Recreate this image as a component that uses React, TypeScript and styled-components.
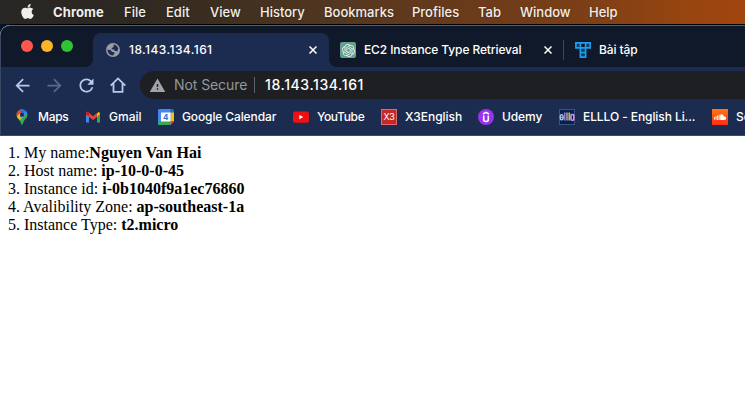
import React from 'react';
import styled, { createGlobalStyle } from 'styled-components';
import { FaApple } from 'react-icons/fa';
import { SiOpenai } from 'react-icons/si';
import { MdArrowBack, MdArrowForward, MdRefresh, MdWarning } from 'react-icons/md';

const GlobalStyle = createGlobalStyle`
  * { box-sizing: border-box; }
  html, body { margin: 0; padding: 0; overflow: hidden; background: #fff; }
  svg { display: block; flex: none; }
`;

const Desktop = styled.div`
  width: 745px;
  height: 411px;
  overflow: hidden;
  display: flex;
  flex-direction: column;
  background: linear-gradient(90deg, #04182c 0, #000 20px);
  font-family: Inter, 'Liberation Sans', sans-serif;
  white-space: nowrap;
`;

const MenuBar = styled.nav`
  height: 24px;
  flex: none;
  display: flex;
  align-items: center;
  padding-left: 19px;
  color: #f1eeeb;
  font-size: 13px;
  background: linear-gradient(90deg, #282725 0%, #2d2822 17%, #40301f 32%, #533720 45%, #693a1b 62%, #7d3f16 79%, #974510 92%, #a1440e 100%);
`;

const AppleSlot = styled.div`
  width: 34px;
  padding-bottom: 2px;
`;

const MenuItem = styled.span<{ $w: number; $bold?: boolean; $track?: number }>`
  width: ${p => p.$w}px;
  flex: none;
  line-height: 24px;
  font-weight: ${p => (p.$bold ? 700 : 500)};
  letter-spacing: ${p => p.$track ?? 0}px;
  text-shadow: 0 1px 2px rgba(0, 0, 0, 0.3);
`;

const Window = styled.div`
  flex: 1;
  margin-top: 1px;
  display: flex;
  flex-direction: column;
  border-radius: 10px 0 0 0;
  overflow: hidden;
  background: #fff;
`;

const Chrome = styled.div`
  height: 111px;
  flex: none;
  background: #1c2c50;
  border-top: 1px solid #535c69;
  border-left: 1px solid #3a4760;
  border-bottom: 1px solid #354b78;
  border-radius: 10px 0 0 0;
  overflow: hidden;
`;

const TabStrip = styled.div`
  height: 41px;
  display: flex;
  align-items: flex-end;
  background: #0f192a;
`;

const Controls = styled.div`
  width: 92px;
  height: 41px;
  flex: none;
  display: flex;
  gap: 8px;
  padding: 14px 0 0 20px;
  background: #0f192a;
  border-radius: 0 0 8px 0;
`;

const Light = styled.i<{ $c: string }>`
  width: 12px;
  height: 12px;
  border-radius: 50%;
  background: ${p => p.$c};
`;

const TabBacking = styled.div`
  display: flex;
  flex: 1;
  height: 41px;
  align-items: flex-end;
  background: linear-gradient(#0f192a 0 20px, #1c2c50 20px);
`;

const ActiveTab = styled.div`
  width: 236px;
  height: 34px;
  flex: none;
  display: flex;
  align-items: center;
  padding: 0 10px 0 13px;
  background: #1c2c50;
  border-radius: 8px 8px 0 0;
`;

const RestTabs = styled.div`
  flex: 1;
  height: 41px;
  display: flex;
  align-items: center;
  padding: 7px 0 0 11px;
  background: #0f192a;
  border-radius: 0 0 0 8px;
`;

const TabTitle = styled.span<{ $w: number; $track?: number }>`
  width: ${p => p.$w}px;
  flex: none;
  color: #fff;
  font-size: 12px;
  font-weight: 500;
  line-height: 16px;
  letter-spacing: ${p => p.$track ?? 0}px;
`;

const IconSlot = styled.span<{ $w: number }>`
  width: ${p => p.$w}px;
  flex: none;
`;

const OpenAiTile = styled.span`
  width: 16px;
  height: 16px;
  margin-right: 8px;
  flex: none;
  display: grid;
  place-items: center;
  color: #e6f2ee;
  background: #65a08e;
  border-radius: 2px;
`;

const Divider = styled.span<{ $h: number; $c: string }>`
  width: 1px;
  height: ${p => p.$h}px;
  flex: none;
  background: ${p => p.$c};
`;

const Toolbar = styled.div`
  height: 36px;
  display: flex;
  align-items: center;
  padding-left: 11px;
  color: #b7c9ec;
`;

const NavButton = styled.span<{ $dim?: boolean }>`
  width: 32px;
  flex: none;
  opacity: ${p => (p.$dim ? 0.38 : 1)};
`;

const HomeButton = styled(NavButton)`
  padding-left: 2px;
`;

const AddressBar = styled.div`
  flex: 1;
  height: 28px;
  display: flex;
  align-items: center;
  padding-left: 9px;
  background: #1e1f22;
  border-radius: 14px 0 0 14px;
  color: #a0a3a8;
`;

const AddressText = styled.span<{ $w: number; $bright?: boolean; $track?: number }>`
  width: ${p => p.$w}px;
  flex: none;
  font-size: 14px;
  line-height: 16px;
  padding-bottom: 1px;
  font-weight: ${p => (p.$bright ? 500 : 400)};
  color: ${p => (p.$bright ? '#fff' : '#94979c')};
  letter-spacing: ${p => p.$track ?? 0}px;
`;

const BookmarkBar = styled.div`
  height: 32px;
  display: flex;
  align-items: center;
  padding: 0 0 4px 13px;
`;

const Bookmark = styled.div<{ $w: number; $track?: number }>`
  width: ${p => p.$w}px;
  flex: none;
  display: flex;
  align-items: center;
  gap: 8px;
  color: #fff;
  font-size: 12px;
  font-weight: 500;
  line-height: 16px;
  letter-spacing: ${p => p.$track ?? 0}px;
`;

const Tile = styled.span<{ $bg: string; $round?: boolean }>`
  width: 16px;
  height: 16px;
  flex: none;
  display: grid;
  place-items: center;
  overflow: hidden;
  color: #fff;
  background: ${p => p.$bg};
  border-radius: ${p => (p.$round ? '50%' : '0')};
`;

const X3Tile = styled(Tile)`
  border: 1px solid #e06a6b;
  font: 400 9px/14px Inter, sans-serif;
  letter-spacing: -0.2px;
`;

const Page = styled.main`
  padding: 8px;
  color: #000;
  font: 16px/18px 'Liberation Serif', 'Times New Roman', serif;
`;

const Line = styled.div`
  height: 18px;
`;

const Globe = () => (
  <svg width="14" height="14" viewBox="0 0 14 14">
    <circle cx="7" cy="7" r="7" fill="#9a9da4" />
    <path d="M7.600 1.600C9.800 1.800 11.800 3.300 12.300 5.800L11.200 8.200 8.800 8 8 6.500 5.600 6.200 5.800 4.800 7.500 4.200z" fill="#1c2c50" />
    <path d="M1.500 6.500L4.800 7.200 6 8.900 8.400 9.300 8.300 11 6.600 12.500C4 12.300 1.600 10.200 1.500 6.500z" fill="#1c2c50" />
  </svg>
);

const Close = () => (
  <svg width="8" height="8" viewBox="0 0 8 8" fill="none" stroke="#fff" strokeWidth="1.5">
    <path d="M.5.5l7 7M7.5.5l-7 7" />
  </svg>
);

const TetrisT = () => (
  <svg width="16" height="16" viewBox="0 0 16 16" fill="#0b3a63" stroke="#1d9fee" strokeWidth="1.7">
    <path d="M.9.9h14.200v4.900H10.600v9.300H5.400V5.800H.9zM5.400 1v4.800h5.200V1M5.400 10.500h5.200" />
  </svg>
);

const Home = () => (
  <svg width="16" height="16" viewBox="0 0 16 16" fill="none" stroke="#b7c9ec" strokeWidth="1.8">
    <path d="M.7 8.700L8 1.400l7.300 7.300M3.500 6.500v8.300h9V6.500" />
  </svg>
);

const MapsPin = () => (
  <svg width="16" height="16" viewBox="0 0 16 16">
    <clipPath id="pin"><path d="M8 .3a5.5 5.5 0 0 1 5.5 5.5c0 3-2.4 4.1-3.6 6.4C9 13.7 9 15.7 8 15.7s-1-2-1.9-3.5C4.900 9.900 2.500 8.800 2.500 5.800A5.500 5.500 0 0 1 8 .3z" /></clipPath>
    <g clipPath="url(#pin)">
      <path d="M0 0h16v16H0z" fill="#34a853" />
      <path d="M0 0h8.500L9 3 4.500 8 0 6z" fill="#ea4335" />
      <path d="M6.500 0H16L7.500 6z" fill="#1a73e8" />
      <path d="M16 0L9.500 4 6 7.800 8 8 15 3z" fill="#4285f4" />
      <path d="M1 9.500L6 4v4.500l3-.5-5 5z" fill="#fbbc04" />
    </g>
    <circle cx="8" cy="5.800" r="2" fill="#1c2c50" />
  </svg>
);

const Gmail = () => (
  <svg width="16" height="16" viewBox="0 0 16 16">
    <path d="M1 4v9.500h3V7z" fill="#4285f4" />
    <path d="M15 4v9.500h-3V7z" fill="#34a853" />
    <path d="M12 4.500L13.500 3Q15 3 15 5L12 7.500z" fill="#fbbc04" />
    <path d="M1 5.200V4.500Q1 2.200 3 3l5 4.200L12 4v4L8 11 1 5.800z" fill="#ea4335" />
    <path d="M1 4.200Q1.400 2.400 3 3l1 .9v3.700L1 5.300z" fill="#c5221f" />
  </svg>
);

const Calendar = () => (
  <svg width="16" height="16" viewBox="0 0 16 16">
    <path d="M1 0h12v16H0V1z" fill="#4285f4" />
    <path d="M12.500 0H15l1 1v3h-3.500z" fill="#1967d2" />
    <path d="M12.500 3.500H16v9h-3.500z" fill="#fbbc04" />
    <path d="M0 12.500h12.500V16H1l-1-1z" fill="#34a853" />
    <path d="M12.500 12.500H16L12.500 16z" fill="#ea4335" />
    <path d="M3 3.500h9.500v9H3z" fill="#fff" />
    <text x="7.800" y="11" textAnchor="middle" fontFamily="Inter" fontSize="8" fontWeight="700" letterSpacing="0" fill="#2b6dd8">4</text>
  </svg>
);

const YouTube = () => (
  <svg width="16" height="16" viewBox="0 0 16 16">
    <rect x="0" y="2.500" width="16" height="11.200" rx="2.500" fill="#f00f12" />
    <path d="M6.300 5.900v4.400L10.300 8.100z" fill="#fff" />
  </svg>
);

const UdemyMark = () => (
  <svg width="16" height="16" viewBox="0 0 16 16" fill="none" stroke="#fff" strokeWidth="1.600">
    <path d="M5 5l3-1.700L11 5" />
    <path d="M5.700 6.500v4q0 2 2.300 2t2.300-2v-4" />
  </svg>
);

const Ello = () => (
  <svg width="16" height="16" viewBox="0 0 16 16">
    <rect x=".5" y=".5" width="15" height="15" fill="#09204f" stroke="#395579" />
    <ellipse cx="2.700" cy="8.300" rx="1.500" ry="2.600" fill="none" stroke="#a5d3f3" strokeWidth="1.300" />
    <path d="M1.500 8.300h3" stroke="#a5d3f3" />
    <path d="M5.700 3.500v8" stroke="#9b71ce" strokeWidth="1.700" />
    <path d="M8 3.500v8" stroke="#8a7fa0" strokeWidth="2" />
    <path d="M10.300 3.500v8" stroke="#9bd238" strokeWidth="1.700" />
    <rect x="12" y="5.600" width="2.800" height="5.600" rx="1" fill="none" stroke="#e68ef2" strokeWidth="1.500" />
  </svg>
);

const SoundCloudMark = () => (
  <svg width="16" height="16" viewBox="0 0 16 16" fill="#fff">
    <path d="M2 8h.9v2.600H2zM3.600 7h.9v3.800h-.9zM5.200 6.500h.9v4.400h-.9zM6.700 5.700h.9v5.200h-.9z" />
    <path d="M8.200 5.500Q11.200 4.500 12 7.500 14.200 7.300 14.200 9.200 14.100 10.900 12.500 10.900H8.200z" />
  </svg>
);

const MENU: { label: string; w: number }[] = [
  { label: 'File', w: 42 },
  { label: 'Edit', w: 44 },
  { label: 'View', w: 50 },
  { label: 'History', w: 64 },
  { label: 'Bookmarks', w: 88 },
  { label: 'Profiles', w: 66 },
  { label: 'Tab', w: 42 },
  { label: 'Window', w: 69 },
  { label: 'Help', w: 40 },
];

const BOOKMARKS: { label: string; w: number; icon: React.ReactNode; track?: number }[] = [
  { label: 'Maps', w: 71, icon: <MapsPin />, track: -0.3 },
  { label: 'Gmail', w: 73, icon: <Gmail /> },
  { label: 'Google Calendar', w: 135, icon: <Calendar />, track: -0.12 },
  { label: 'YouTube', w: 88, icon: <YouTube />, track: -0.35 },
  { label: 'X3English', w: 97, icon: <X3Tile $bg="#c5282b">X3</X3Tile> },
  { label: 'Udemy', w: 81, icon: <Tile $bg="#9b32ee" $round><UdemyMark /></Tile>, track: -0.1 },
  { label: 'ELLLO - English Li...', w: 153, icon: <Ello />, track: -0.08 },
  { label: 'SoundCloud', w: 100, icon: <Tile $bg="linear-gradient(#ff7a0c, #ff2a18)"><SoundCloudMark /></Tile> },
];

const FACTS: [string, string][] = [
  ['1. My name:', 'Nguyen Van Hai'],
  ['2. Host name: ', 'ip-10-0-0-45'],
  ['3. Instance id: ', 'i-0b1040f9a1ec76860'],
  ['4. Avalibility Zone: ', 'ap-southeast-1a'],
  ['5. Instance Type: ', 't2.micro'],
];

export default function App() {
  return (
    <Desktop>
      <GlobalStyle />
      <MenuBar>
        <AppleSlot><FaApple size={17} /></AppleSlot>
        <MenuItem $w={71} $bold $track={0.1}>Chrome</MenuItem>
        {MENU.map(m => <MenuItem key={m.label} $w={m.w}>{m.label}</MenuItem>)}
      </MenuBar>
      <Window>
        <Chrome>
          <TabStrip>
            <TabBacking>
              <Controls>
                <Light $c="#ff574f" />
                <Light $c="#fdb429" />
                <Light $c="#30c334" />
              </Controls>
              <ActiveTab>
                <IconSlot $w={23}><Globe /></IconSlot>
                <TabTitle $w={180} $track={0.42}>18.143.134.161</TabTitle>
                <Close />
              </ActiveTab>
              <RestTabs>
                <OpenAiTile><SiOpenai size={13} /></OpenAiTile>
                <TabTitle $w={180} $track={-0.12}>EC2 Instance Type Retrieval</TabTitle>
                <IconSlot $w={19}><Close /></IconSlot>
                <Divider $h={20} $c="#3e4755" />
                <IconSlot $w={11} />
                <IconSlot $w={24}><TetrisT /></IconSlot>
                <TabTitle $w={60} $track={-0.1}>Bài tập</TabTitle>
              </RestTabs>
            </TabBacking>
          </TabStrip>
          <Toolbar>
            <NavButton><MdArrowBack size={21} /></NavButton>
            <NavButton $dim><MdArrowForward size={21} /></NavButton>
            <NavButton><MdRefresh size={21} /></NavButton>
            <HomeButton><Home /></HomeButton>
            <AddressBar>
              <IconSlot $w={25}><MdWarning size={17} /></IconSlot>
              <AddressText $w={80} $track={-0.08}>Not Secure</AddressText>
              <Divider $h={16} $c="#5f6267" />
              <IconSlot $w={10} />
              <AddressText $w={120} $bright $track={0.6}>18.143.134.161</AddressText>
            </AddressBar>
          </Toolbar>
          <BookmarkBar>
            {BOOKMARKS.map(b => (
              <Bookmark key={b.label} $w={b.w} $track={b.track}>{b.icon}{b.label}</Bookmark>
            ))}
          </BookmarkBar>
        </Chrome>
        <Page>
          {FACTS.map(([label, value]) => <Line key={label}>{label}<b>{value}</b></Line>)}
        </Page>
      </Window>
    </Desktop>
  );
}
